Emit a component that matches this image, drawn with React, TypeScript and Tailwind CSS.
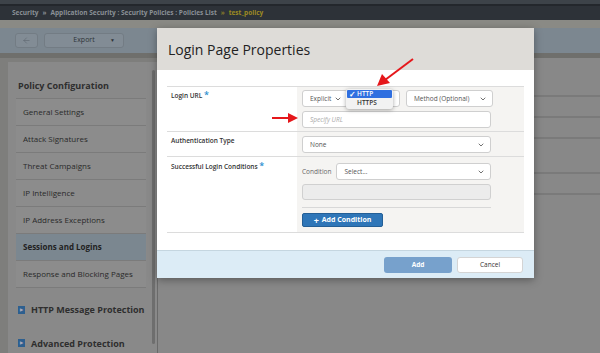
import { ArrowLeft, ChevronDown } from "lucide-react";

const navItems = [
    "General Settings",
    "Attack Signatures",
    "Threat Campaigns",
    "IP Intelligence",
    "IP Address Exceptions",
    "Sessions and Logins",
    "Response and Blocking Pages",
];

const Select = ({ label, className }: { label: string; className: string }) => (
    <div className={`flex items-center justify-between h-[17px] bg-white border border-[#cfcfcf] rounded-[3px] pl-[7px] pr-[5px] text-[6.5px] text-[#555] whitespace-nowrap ${className}`}>
        <span>{label}</span>
        <ChevronDown size={8} strokeWidth={2.5} className="text-[#555] shrink-0" />
    </div>
);

const App = () => {
    return (
        <div className="relative w-[600px] h-[353px] overflow-hidden bg-[#7e7e7c] font-['Open_Sans',sans-serif]">
            {/* top bars */}
            <div className="h-[6px] bg-[#3d4349] border-b-[2px] border-[#23272c]" />
            <div className="h-[14px] bg-[#2d3238] flex items-center px-[12px] text-[6.5px] font-bold text-[#8a9096] whitespace-nowrap">
                <span>Security</span>
                <span className="mx-[4px]">»</span>
                <span>Application Security : Security Policies : Policies List</span>
                <span className="mx-[4px] text-[#8a7a2a]">»</span>
                <span className="text-[#9c8a22]">test_policy</span>
            </div>
            <div className="h-[8px] bg-[#8a8a85]" />
            <div className="h-[25px] bg-[#7c8790] flex items-center px-[15px] gap-[6px]">
                <div className="w-[23px] h-[15px] rounded-[3px] bg-[#828c95] border border-[#737c84] flex items-center justify-center text-[#5b646c]">
                    <ArrowLeft size={9} strokeWidth={1.5} />
                </div>
                <div className="w-[80px] h-[15px] rounded-[3px] bg-[#828c95] border border-[#737c84] flex items-center justify-center relative text-[7px] text-[#2f3438]">
                    Export
                    <span className="absolute right-[8px] text-[5px]">▼</span>
                </div>
            </div>
            <div className="h-[5px] bg-[#6f6f6c]" />

            <div className="flex h-[295px]">
                {/* sidebar */}
                <div className="ml-[8px] mt-[4px] w-[149px] bg-[#898989] flex relative">
                    <div className="flex-1 pl-[8px] pr-[11px]">
                        <div className="pl-[2px] pt-[17px] pb-[5px] text-[9px] font-bold text-[#2e2e2e] leading-[14px]">Policy Configuration</div>
                        <div className="border-t border-[#7b7b7b]">
                            {navItems.map((item) => (
                                <div
                                    key={item}
                                    className={`h-[27px] flex items-center pl-[7px] text-[8px] border-b border-[#7b7b7b] ${
                                        item === "Sessions and Logins"
                                            ? "bg-[#7b8790] font-bold text-[#222]"
                                            : "bg-[#8c8c8c] text-[#2a2a2a]"
                                    }`}
                                >
                                    {item}
                                </div>
                            ))}
                        </div>
                        <div className="flex items-center gap-[6px] pl-[2px] mt-[15px] text-[9px] font-bold text-[#2e2e2e] whitespace-nowrap">
                            <span className="w-[7px] h-[8px] bg-[#2d5f8f] flex items-center justify-center text-[4px] text-[#aab]">▶</span>
                            HTTP Message Protection
                        </div>
                        <div className="flex items-center gap-[6px] pl-[2px] mt-[20px] text-[9px] font-bold text-[#2e2e2e] whitespace-nowrap">
                            <span className="w-[7px] h-[8px] bg-[#2d5f8f] flex items-center justify-center text-[4px] text-[#aab]">▶</span>
                            Advanced Protection
                        </div>
                    </div>
                    <div className="absolute right-[2px] top-[8px] w-[3px] h-[274px] rounded bg-[#6e6e6e]" />
                </div>
                <div className="w-[1px] bg-[#6a6a6a]" />
                {/* content */}
                <div className="flex-1 bg-[#888888]">
                    <div className="h-[39px] border-b-[2px] border-[#7a7a7a]" />
                    <div className="h-[21px] border-b-[2px] border-[#7a7a7a]" />
                    <div className="h-[21px] border-b-[2px] border-[#7a7a7a]" />
                    <div className="h-[35px] border-b-[2px] border-[#7a7a7a]" />
                    <div className="h-[21px] border-b-[2px] border-[#7a7a7a]" />
                </div>
            </div>

            {/* modal */}
            <div className="absolute left-[157px] top-[28px] w-[377px] h-[250px] bg-white shadow-[0_2px_8px_rgba(0,0,0,0.35)] flex flex-col">
                <div className="h-[42px] bg-[#dedcd8] flex items-center pl-[11px] text-[14px] text-[#222]">Login Page Properties</div>
                <div className="flex-1 pt-[16px] px-[10px]">
                    <div className="border-t border-[#dcdcdc]">
                        <div className="flex h-[45px] border-b border-[#dcdcdc]">
                            <div className="w-[130px] pl-[4px] pt-[3px] text-[6.5px] font-semibold text-[#333]">
                                Login URL <span className="text-[#2a8fd0] text-[9px] leading-none">*</span>
                            </div>
                            <div className="flex-1 bg-[#f5f4f2] pl-[5px] pt-[3px]">
                                <div className="flex gap-[5px]">
                                    <Select label="Explicit" className="w-[46px]" />
                                    <Select label="" className="w-[47px]" />
                                    <Select label="Method (Optional)" className="w-[87px] ml-[1px]" />
                                </div>
                                <div className="mt-[4px] w-[189px] h-[17px] bg-white border border-[#cfcfcf] rounded-[3px] px-[7px] flex items-center text-[6.5px] italic text-[#aaa]">Specify URL</div>
                            </div>
                        </div>
                        <div className="flex h-[25px] border-b border-[#dcdcdc]">
                            <div className="w-[130px] pl-[4px] pt-[4px] text-[6.5px] font-semibold text-[#333]">Authentication Type</div>
                            <div className="flex-1 bg-[#f5f4f2] pl-[5px] pt-[4px]">
                                <Select label="None" className="w-[189px]" />
                            </div>
                        </div>
                        <div className="flex h-[76px] border-b border-[#dcdcdc]">
                            <div className="w-[130px] pl-[4px] pt-[4px] text-[6.5px] font-semibold text-[#333]">
                                Successful Login Conditions <span className="text-[#2a8fd0] text-[9px] leading-none">*</span>
                            </div>
                            <div className="flex-1 bg-[#f5f4f2] pl-[5px] pt-[6px]">
                                <div className="w-[189px]">
                                    <div className="flex items-center gap-[5px]">
                                        <span className="text-[6.5px] text-[#666]">Condition</span>
                                        <Select label="Select..." className="flex-1" />
                                    </div>
                                    <div className="mt-[4px] h-[16px] bg-[#ececec] border border-[#d0d0d0] rounded-[3px]" />
                                    <div className="mt-[7px] border-t border-[#d8d8d8]" />
                                    <div className="mt-[5px] w-[81px] h-[14px] rounded-[2px] bg-[#2f76b8] border border-[#245f96] flex items-center justify-center gap-[3px] text-[7px] font-bold text-white">
                                        <span className="text-[9px] leading-none">+</span> Add Condition
                                    </div>
                                </div>
                            </div>
                        </div>
                    </div>
                </div>
                <div className="h-[28px] bg-[#dcecf6] border-t border-[#c5d6e0] flex items-center justify-end gap-[5px] pr-[11px]">
                    <div className="w-[68px] h-[16px] rounded-[3px] bg-[#77a1cc] flex items-center justify-center text-[6.5px] font-bold text-white">Add</div>
                    <div className="w-[66px] h-[16px] rounded-[3px] bg-white border border-[#d4d4d4] flex items-center justify-center text-[6.5px] text-[#333]">Cancel</div>
                </div>
            </div>

            {/* native select popup */}
            <div className="absolute left-[346px] top-[89px] w-[47px] h-[20px] bg-[#f2f2f2] rounded-[3px] shadow-[0_1px_4px_rgba(0,0,0,0.35)] p-[1px] text-[6.5px] font-semibold">
                <div className="h-[8px] bg-[#2f6fe0] text-white flex items-center rounded-[1px] pl-[2px]">
                    <span className="w-[8px] text-[8px]">✓</span>HTTP
                </div>
                <div className="h-[9px] flex items-center pl-[10px] text-[#333]">HTTPS</div>
            </div>

            {/* red arrows */}
            <svg className="absolute left-0 top-0" width="600" height="353">
                <line x1="413" y1="59" x2="385" y2="80" stroke="#e5171b" strokeWidth="2" />
                <polygon points="377,86 382,74 390,83" fill="#e5171b" />
                <line x1="272" y1="118" x2="290" y2="118" stroke="#e5171b" strokeWidth="2" />
                <polygon points="298,118 288,113 288,123" fill="#e5171b" />
            </svg>
        </div>
    );
};

export default App;
